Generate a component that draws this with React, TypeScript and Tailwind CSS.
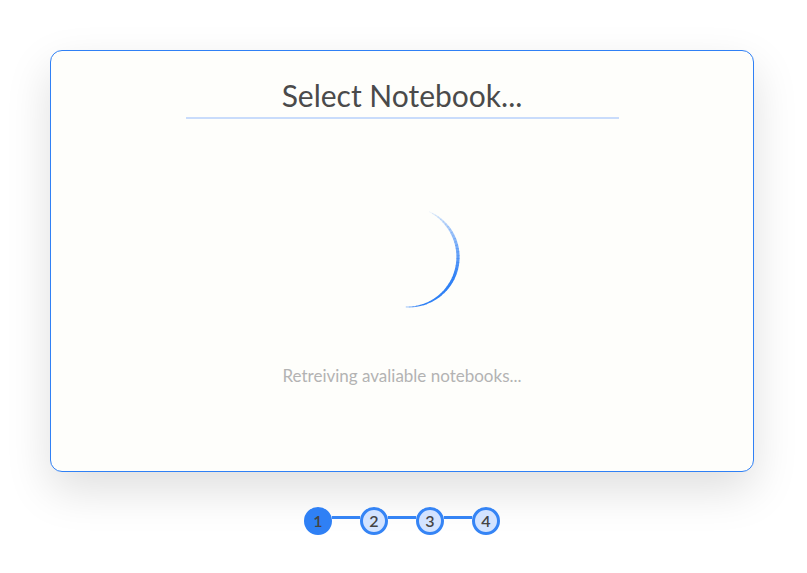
import React from "react";

function Spinner() {
  const cx = 60, cy = 60, r = 50;
  const segs: React.ReactNode[] = [];
  const start = 25, end = 182, n = 40;
  for (let i = 0; i < n; i++) {
    const a0 = start + ((end - start) * i) / n;
    const a1 = start + ((end - start) * (i + 1)) / n + 0.5;
    const t = (i + 0.5) / n;
    const p = (deg: number) => {
      const rad = (deg * Math.PI) / 180;
      return [cx + r * Math.sin(rad), cy - r * Math.cos(rad)];
    };
    const [x0, y0] = p(a0);
    const [x1, y1] = p(a1);
    const w = 0.4 + 2.8 * Math.sin(Math.PI * Math.pow(t, 0.8));
    const op = Math.min(1, 0.1 + t * 1.6);
    segs.push(
      <path
        key={i}
        d={`M ${x0} ${y0} A ${r} ${r} 0 0 1 ${x1} ${y1}`}
        stroke="#2f80f5"
        strokeWidth={w}
        strokeOpacity={op}
        fill="none"
      />
    );
  }
  return (
    <svg width="120" height="120" viewBox="0 0 120 120">
      {segs}
    </svg>
  );
}

function Step({ n, active }: { n: number; active?: boolean }) {
  return (
    <div
      className={
        active
          ? "w-[28px] h-[28px] rounded-full bg-[#2f80f5] border-[3px] border-[#2f80f5] flex items-center justify-center text-[16px] font-semibold text-[#444]"
          : "w-[28px] h-[28px] rounded-full bg-[#d3e3ff] border-[3px] border-[#3584f5] flex items-center justify-center text-[16px] font-semibold text-[#444]"
      }
    >
      <span className="leading-none">{n}</span>
    </div>
  );
}

function Line() {
  return <div className="w-[28px] h-[3px] bg-[#3584f5] -mt-[8px]" />;
}

export default function App() {
  return (
    <div
      className="w-[807px] h-[573px] bg-white overflow-hidden"
      style={{ fontFamily: "Lato, 'Noto Sans', sans-serif" }}
    >
      <div className="pt-[50px] pl-[50px]">
        <div className="w-[704px] h-[422px] rounded-[12px] border border-[#2f80f5] bg-[#fefefb] shadow-[0_18px_45px_rgba(0,0,0,0.13)] flex flex-col items-center">
          <div className="mt-[25px] text-[30px] leading-[38px] text-[#4a4a4a]">Select Notebook...</div>
          <div className="mt-[3px] w-[433px] h-[2px] bg-[#c9dcfb]" />
          <div className="mt-[78px] ml-[11px]">
            <Spinner />
          </div>
          <div className="mt-[48px] text-[17px] leading-[22px] text-[#b3b3b3]">Retreiving avaliable notebooks...</div>
        </div>
      </div>
      <div className="mt-[35px] pl-[304px] flex items-center">
        <Step n={1} active />
        <Line />
        <Step n={2} />
        <Line />
        <Step n={3} />
        <Line />
        <Step n={4} />
      </div>
    </div>
  );
}
